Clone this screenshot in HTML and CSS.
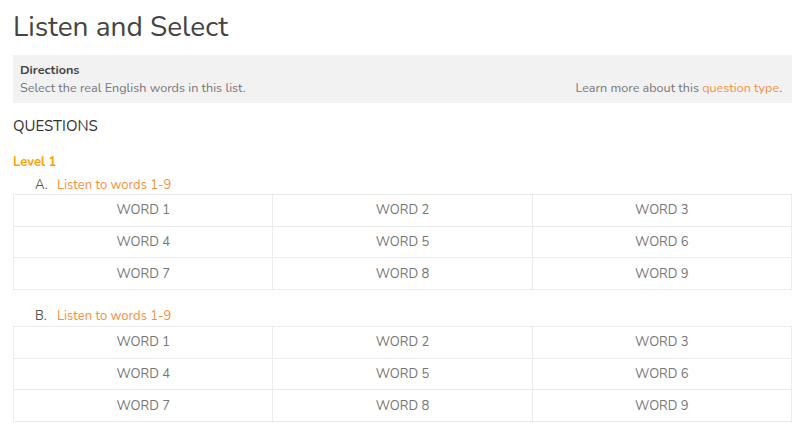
FILE: index.html
```html
<!DOCTYPE html>
<html>
<head>
<meta charset="utf-8">
<link rel="stylesheet" href="styles.css">
</head>
<body>
<div class="page">
  <h1 class="title">Listen and Select</h1>
  <div class="directions">
    <div class="dir-head">Directions</div>
    <div class="dir-row">
      <span>Select the real English words in this list.</span>
      <span>Learn more about this <a class="link">question type</a>.</span>
    </div>
  </div>
  <div class="questions">QUESTIONS</div>
  <div class="level">Level 1</div>

  <div class="q">
    <div class="q-head"><span class="q-letter">A.</span><a class="link">Listen to words 1-9</a></div>
    <div class="grid">
      <div class="cell">WORD 1</div><div class="cell">WORD 2</div><div class="cell">WORD 3</div>
      <div class="cell">WORD 4</div><div class="cell">WORD 5</div><div class="cell">WORD 6</div>
      <div class="cell">WORD 7</div><div class="cell">WORD 8</div><div class="cell">WORD 9</div>
    </div>
  </div>

  <div class="q">
    <div class="q-head"><span class="q-letter">B.</span><a class="link">Listen to words 1-9</a></div>
    <div class="grid">
      <div class="cell">WORD 1</div><div class="cell">WORD 2</div><div class="cell">WORD 3</div>
      <div class="cell">WORD 4</div><div class="cell">WORD 5</div><div class="cell">WORD 6</div>
      <div class="cell">WORD 7</div><div class="cell">WORD 8</div><div class="cell">WORD 9</div>
    </div>
  </div>
</div>
</body>
</html>
```
FILE: styles.css
```css
* { box-sizing: border-box; }
body {
  margin: 0;
  background: #fff;
  font-family: "Nunito", "Lato", "Open Sans", sans-serif;
  color: #555;
}
.page {
  padding: 0 13px;
  width: 805px;
}
.title {
  margin: 0;
  padding-top: 9px;
  font-size: 28px;
  font-weight: 400;
  line-height: 36px;
  color: #444;
  height: 55px;
}
.directions {
  background: #f2f2f2;
  padding: 6px 10px 4px 7px;
  height: 48px;
  font-size: 12.6px;
  line-height: 18px;
}
.dir-head {
  font-weight: 700;
  color: #444;
}
.dir-row {
  display: flex;
  justify-content: space-between;
  color: #777;
}
.link { color: #f7913d; }
.questions {
  margin-top: 14px;
  font-size: 15px;
  line-height: 18px;
  color: #333;
}
.level {
  margin-top: 19px;
  font-size: 13px;
  line-height: 17px;
  font-weight: 700;
  color: #ffa200;
}
.q { margin-bottom: 18px; }
.q-head {
  font-size: 13px;
  line-height: 17px;
  padding-left: 22px;
  margin-top: 6px;
}
.q + .q .grid { margin-top: 1px; }
.q-letter {
  display: inline-block;
  width: 22px;
  color: #555;
}
.grid {
  display: grid;
  grid-template-columns: 1fr 1fr 1fr;
  border-top: 1px solid #ececec;
  border-left: 1px solid #ececec;
  margin-top: 0;
}
.cell {
  height: 31.7px;
  display: flex;
  align-items: center;
  justify-content: center;
  border-right: 1px solid #ececec;
  border-bottom: 1px solid #ececec;
  font-size: 13px;
  color: #777;
}
```
